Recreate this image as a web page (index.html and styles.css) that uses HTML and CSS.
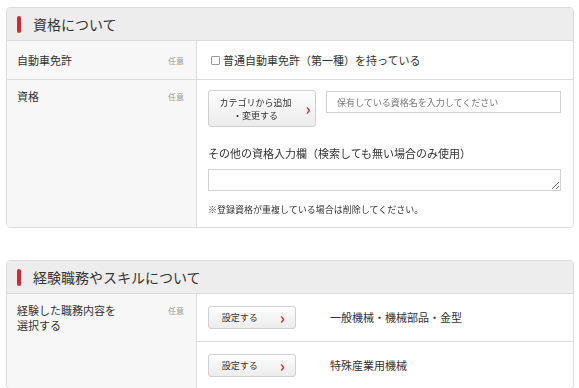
FILE: index.html
```html
<!DOCTYPE html>
<html lang="ja">
  <head>
    <meta charset="UTF-8" />
    <meta name="viewport" content="width=device-width, initial-scale=1.0" />
    <title>資格・スキル</title>
    <link rel="stylesheet" href="styles.css">
  </head>
  <body>
    <section class="card">
      <h2 class="card-head">資格について</h2>
      <div class="row">
        <div class="label">
          <span class="label-text">自動車免許</span>
          <span class="optional">任意</span>
        </div>
        <div class="value value-center">
          <label class="check">
            <input type="checkbox" />普通自動車免許（第一種）を持っている
          </label>
        </div>
      </div>
      <div class="row">
        <div class="label label-top">
          <span class="label-text">資格</span>
          <span class="optional">任意</span>
        </div>
        <div class="value value-stack">
          <div class="search-line">
            <button class="btn btn-wide">
              <span>カテゴリから追加<br />・変更する</span>
              <span class="chevron">›</span>
            </button>
            <input class="text-input" type="text" placeholder="保有している資格名を入力してください" />
          </div>
          <p class="sub-title">その他の資格入力欄（検索しても無い場合のみ使用）</p>
          <textarea class="text-area"></textarea>
          <p class="note">※登録資格が重複している場合は削除してください。</p>
        </div>
      </div>
    </section>

    <section class="card">
      <h2 class="card-head">経験職務やスキルについて</h2>
      <div class="row">
        <div class="label label-top">
          <span class="label-text label-narrow">経験した職務内容を<br />選択する</span>
          <span class="optional">任意</span>
        </div>
        <div class="value-list">
          <div class="value value-line">
            <button class="btn">
              <span>設定する</span>
              <span class="chevron">›</span>
            </button>
            <span class="picked">一般機械・機械部品・金型</span>
          </div>
          <div class="value value-line">
            <button class="btn">
              <span>設定する</span>
              <span class="chevron">›</span>
            </button>
            <span class="picked">特殊産業用機械</span>
          </div>
        </div>
      </div>
    </section>
  </body>
</html>
```

FILE: styles.css
```css
body {
  margin: 7px 5px 0 6px;
  font-family: "Noto Sans CJK JP", "Noto Sans", sans-serif;
  color: #333;
  background-color: #fff;
}
.card {
  border: 1px solid #dcdcdc;
  border-radius: 4px;
  overflow: hidden;
  margin-bottom: 32px;
}
.card-head {
  margin: 0;
  height: 32px;
  display: flex;
  align-items: center;
  padding-left: 10px;
  background-color: #ededed;
  border-bottom: 1px solid #dcdcdc;
  font-size: 14px;
  font-weight: normal;
  color: #333;
  line-height: 1;
}
.card-head::before {
  content: "";
  width: 4px;
  height: 17px;
  border-radius: 2px;
  background-color: #d8262e;
  margin-right: 12px;
}
.row {
  display: flex;
  border-top: 1px solid #dcdcdc;
}
.card-head + .row {
  border-top: none;
}
.label {
  width: 167px;
  flex-shrink: 0;
  display: flex;
  justify-content: space-between;
  align-items: center;
  padding: 0 12px 0 10px;
  background-color: #f7f7f7;
  border-right: 1px solid #dcdcdc;
  font-size: 11px;
  line-height: 15px;
}
.label-top {
  align-items: flex-start;
  padding-top: 9px;
}
.optional {
  font-size: 8px;
  color: #999;
  line-height: 15px;
}
.value {
  flex: 1;
  padding: 0 12px 0 11px;
  font-size: 11px;
}
.value-center {
  height: 38px;
  display: flex;
  align-items: center;
}
.check {
  display: flex;
  align-items: center;
  line-height: 1;
}
.check input {
  appearance: none;
  width: 9px;
  height: 9px;
  margin: 0 3px 0 3px;
  border: 1px solid #9a9a9a;
  border-radius: 1px;
  background-color: #fff;
}
.value-stack {
  padding-top: 10px;
  padding-bottom: 11px;
}
.search-line {
  display: flex;
  align-items: flex-start;
  gap: 10px;
}
.btn {
  display: flex;
  align-items: center;
  justify-content: flex-end;
  gap: 22px;
  width: 88px;
  height: 23px;
  padding: 0 10px 0 0;
  border: 1px solid #cfcfcf;
  border-radius: 3px;
  background: linear-gradient(#fdfdfd, #ececec);
  font-family: inherit;
  font-size: 9px;
  color: #333;
  line-height: 13px;
  cursor: pointer;
}
.btn-wide {
  width: 108px;
  height: 37px;
  justify-content: center;
  gap: 14px;
  padding: 0 0 0 6px;
}
.chevron {
  color: #c9303a;
  font-size: 16px;
  font-weight: bold;
  line-height: 1;
  margin-top: -2px;
}
.text-input {
  flex: 1;
  height: 22px;
  margin-top: 1px;
  box-sizing: border-box;
  padding: 0 10px;
  border: 1px solid #d0d0d0;
  font-family: inherit;
  font-size: 9px;
}
.text-input::placeholder {
  color: #777;
}
.sub-title {
  margin: 19px 0 8px;
  font-size: 11px;
  line-height: 15px;
}
.text-area {
  display: block;
  width: 100%;
  height: 22px;
  box-sizing: border-box;
  border: 1px solid #d0d0d0;
  margin: 0;
  font-family: inherit;
}
.note {
  margin: 12px 0 0;
  font-size: 9px;
  line-height: 13px;
}
.value-list {
  flex: 1;
}
.value-line {
  display: flex;
  align-items: flex-start;
  gap: 34px;
  height: 47px;
  box-sizing: border-box;
  padding-top: 12px;
}
.value-line .picked {
  line-height: 23px;
}
.value-line + .value-line {
  border-top: 1px solid #dcdcdc;
}
.picked {
  font-size: 11px;
}
```
